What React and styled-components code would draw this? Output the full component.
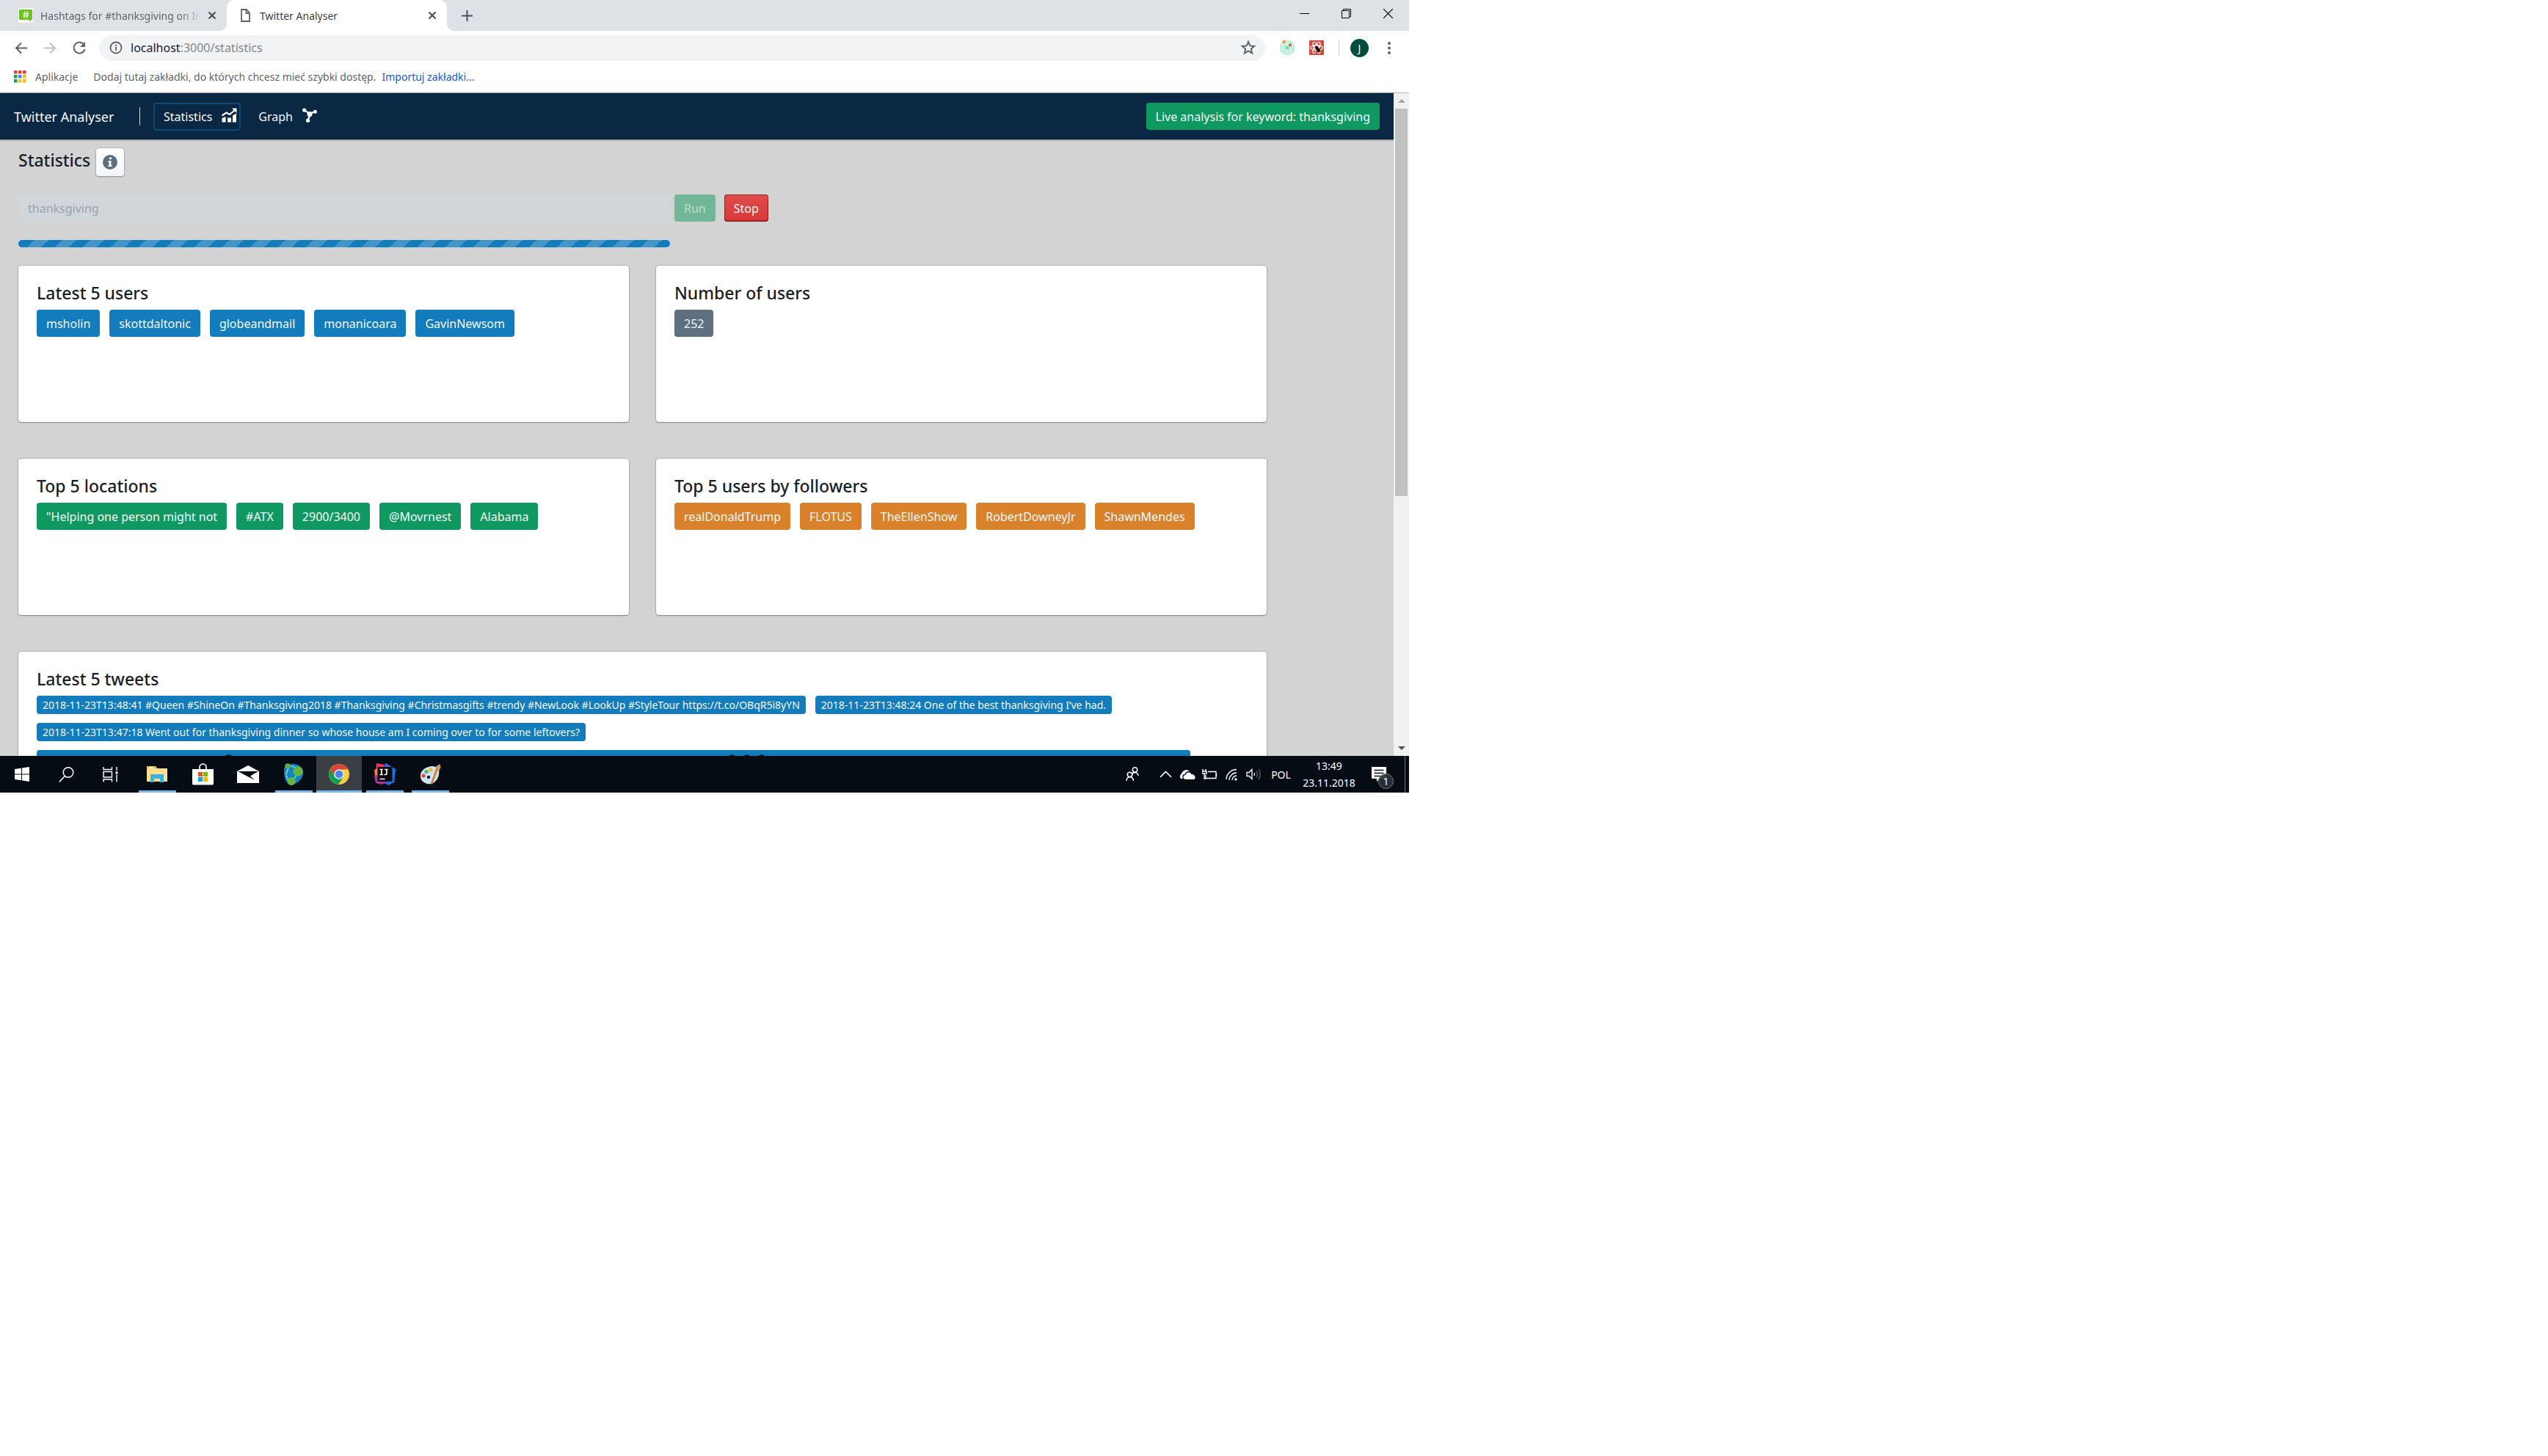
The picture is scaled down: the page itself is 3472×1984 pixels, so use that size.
import React from 'react';
import styled, { createGlobalStyle, css } from 'styled-components';

const GlobalStyle = createGlobalStyle`
  * { box-sizing: border-box; }
  body { margin: 0; background: #fff; }
  body, button, input { font-family: "Noto Sans", "Open Sans", sans-serif; font-size: 16px; }
  button { border: 0; padding: 0; background: none; color: inherit; cursor: pointer; }
  a { color: inherit; text-decoration: none; }
  svg { display: block; flex: none; }
`;

const Desktop = styled.div`
  display: flex;
  flex-direction: column;
  width: 100%;
  max-width: 1920px;
  aspect-ratio: 16 / 9;
  overflow: hidden;
`;

/* ---------- browser chrome ---------- */

const TabStrip = styled.header`
  display: flex;
  flex: none;
  height: 42px;
  background: #dee1e6;
`;

const Tab = styled.div`
  position: relative;
  display: flex;
  align-items: center;
  gap: ${p => (p.$active ? '13px' : '10px')};
  width: ${p => (p.$active ? '300px' : '309px')};
  padding: 0 12px 0 ${p => (p.$active ? '19px' : '25px')};
  font-size: 14px;
  color: #5f6368;
  ${p => p.$active && css`
    background: #fff;
    color: #3c4043;
    border-radius: 10px 10px 0 0;
    &::before, &::after {
      content: '';
      position: absolute;
      bottom: 0;
      width: 10px;
      height: 10px;
    }
    &::before { right: 100%; background: radial-gradient(circle at 0 0, transparent 10px, #fff 10px); }
    &::after { left: 100%; background: radial-gradient(circle at 100% 0, transparent 10px, #fff 10px); }
  `}
`;

const TabTitle = styled.span`
  flex: 1;
  min-width: 0;
  white-space: nowrap;
  ${p => p.$fade && css`mask-image: linear-gradient(90deg, #000 88%, rgba(0, 0, 0, .15));`}
`;

const TabButton = styled.button`
  display: grid;
  place-items: center;
  width: 16px;
  height: 42px;
`;

const NewTab = styled(TabButton)`
  width: 54px;
`;

const WindowButtons = styled.div`
  display: flex;
  margin-left: auto;
`;

const WindowButton = styled.button`
  display: grid;
  place-items: center;
  width: 57px;
  height: 37px;
`;

const Toolbar = styled.div`
  display: flex;
  flex: none;
  align-items: center;
  height: 42px;
  padding: 4px 14px 0 8px;
  background: #fff;
`;

const ToolButton = styled.button`
  display: grid;
  place-items: center;
  width: ${p => p.$w || 40}px;
  height: 36px;
`;

const Omnibox = styled.div`
  display: flex;
  flex: 1;
  align-items: center;
  height: 35px;
  margin: 0 20px 0 7px;
  padding: 0 12px 0 14px;
  border-radius: 18px;
  background: #f1f3f4;
`;

const Address = styled.span`
  flex: 1;
  margin-left: 11px;
  color: #80868b;
  b { font-weight: 400; color: #202124; }
`;

const Extensions = styled.div`
  display: flex;
  align-items: center;
  gap: 20px;
`;

const ToolDivider = styled.i`
  width: 1px;
  height: 20px;
  background: #c6c8cb;
`;

const Avatar = styled.button`
  width: 25px;
  height: 25px;
  margin: 0 15px;
  border-radius: 50%;
  background: #004d40;
  color: #fff;
  font-size: 14px;
`;

const Bookmarks = styled.nav`
  display: flex;
  flex: none;
  align-items: center;
  height: 43px;
  padding: 0 19px 1px;
  border-bottom: 1px solid #b3b3b3;
  background: #fff;
  font-size: 14px;
  color: #5f6368;
`;

const AppsLink = styled.a`
  display: flex;
  align-items: center;
  gap: 12px;
  margin-right: 21px;
`;

const ImportLink = styled.a`
  margin-left: 8px;
  color: #1558d6;
`;

/* ---------- page ---------- */

const Viewport = styled.div`
  display: flex;
  flex: 1;
  min-height: 0;
`;

const Site = styled.div`
  display: flex;
  flex: 1;
  flex-direction: column;
  min-width: 0;
  background: #d3d3d3;
`;

const Navbar = styled.nav`
  display: flex;
  flex: none;
  align-items: center;
  height: 63px;
  padding: 0 19px;
  background: #0a2744;
  color: #f5f8fa;
  box-shadow: 0 0 0 1px rgba(16, 22, 26, .15), 0 1px 2px rgba(16, 22, 26, .35);
`;

const Brand = styled.span`
  width: 171px;
  font-size: 18px;
`;

const NavDivider = styled.i`
  width: 1px;
  height: 25px;
  margin-right: 18px;
  background: #d5dae0;
`;

const NavLink = styled.button`
  display: flex;
  align-items: center;
  gap: 13px;
  height: 38px;
  padding: 0 ${p => (p.$active ? '3px' : '10px')} 0 12px;
  margin-right: 10px;
  border: 2px solid ${p => (p.$active ? '#0c4a78' : 'transparent')};
  border-radius: 4px;
  svg { margin-top: -4px; }
`;

const tones = {
  blue: '#137cbd',
  green: '#0f9960',
  orange: '#d9822b',
  gray: '#5c7080',
};

const Tag = styled.span`
  display: inline-flex;
  align-items: center;
  min-height: ${p => (p.$small ? '25px' : '37px')};
  padding: 0 ${p => (p.$small ? '8px' : '13px')};
  border-radius: 4px;
  background: ${p => tones[p.$tone]};
  color: #f5f8fa;
  font-size: ${p => (p.$small ? '14px' : '16px')};
  line-height: 20px;
  white-space: nowrap;
`;

const LiveTag = styled(Tag)`
  margin-left: auto;
`;

const Page = styled.main`
  flex: 1;
  min-height: 0;
  overflow: hidden;
  padding: 12px 25px 0;
`;

const Heading = styled.h2`
  margin: 0;
  color: #182026;
  font-size: 23px;
  font-weight: 500;
  line-height: 24px;
`;

const TitleRow = styled.div`
  display: flex;
  align-items: center;
  gap: 8px;
  height: 38px;
  margin-bottom: 25px;
  ${Heading} { padding-bottom: 6px; }
`;

const InfoButton = styled.button`
  display: grid;
  place-items: center;
  width: 38px;
  height: 38px;
  border-radius: 4px;
  background: linear-gradient(#fff, #f3f6f8);
  box-shadow: 0 0 0 1px rgba(16, 22, 26, .15), 0 1px 2px rgba(16, 22, 26, .25);
`;

const SearchForm = styled.form`
  display: flex;
  margin-bottom: 25px;
`;

const KeywordInput = styled.input`
  flex: 0 1 888px;
  min-width: 0;
  height: 37px;
  margin-right: 6px;
  padding: 0 13px;
  border: 0;
  border-radius: 4px;
  background: #d0d6da;
  color: #9aa4ac;
`;

const ActionButton = styled.button`
  height: 37px;
  padding: 0 13px;
  margin-right: 12px;
  border-radius: 4px;
  color: #fff;
  ${p => p.$stop ? css`
    background: linear-gradient(#e04b4b, #db3737);
    box-shadow: inset 0 0 0 1px rgba(110, 20, 24, .7), inset 0 -2px 1px rgba(90, 16, 20, .35);
  ` : css`
    background: #72b698;
    color: #bfdccf;
  `}
`;

const ProgressBar = styled.div`
  max-width: 888px;
  height: 10px;
  margin-bottom: 25px;
  border-radius: 5px;
  background: #137cbd linear-gradient(-45deg,
    rgba(255, 255, 255, .2) 25%, transparent 25%, transparent 50%,
    rgba(255, 255, 255, .2) 50%, rgba(255, 255, 255, .2) 75%, transparent 75%) 3px 0 / 38px 38px;
`;

const Cards = styled.section`
  display: grid;
  grid-template-columns: 1fr 1fr;
  gap: 50px 37px;
  max-width: 1701px;
`;

const Card = styled.article`
  grid-column: ${p => (p.$wide ? '1 / -1' : 'auto')};
  min-height: 213px;
  padding: 25px;
  border-radius: 4px;
  background: #fff;
  box-shadow: 0 0 0 1px rgba(16, 22, 26, .15), 0 1px 2px rgba(16, 22, 26, .3);
`;

const Tags = styled.div`
  display: flex;
  flex-wrap: wrap;
  gap: 12px 13px;
  margin-top: 11px;
`;

const EmojiTweet = styled(Tag)`
  width: 1572px;
  align-items: flex-start;
  padding: 6px 0 0 255px;
`;

const EmojiGroup = styled.span`
  display: flex;
  gap: 7px;
  &:last-child { margin-left: 673px; }
`;

const Scrollbar = styled.div`
  display: flex;
  flex-direction: column;
  flex: none;
  width: 21px;
  padding: 0 2px;
  background: #f1f1f1;
`;

const ScrollArrow = styled.button`
  display: grid;
  place-items: center;
  height: 21px;
`;

const Thumb = styled.div`
  height: 528px;
  margin-bottom: auto;
  background: #c1c1c1;
`;

/* ---------- taskbar ---------- */

const Taskbar = styled.footer`
  display: flex;
  flex: none;
  height: 50px;
  background: #060c14;
  color: #fff;
`;

const SystemButton = styled.button`
  display: grid;
  place-items: center;
  width: ${p => p.$w || 60}px;
  height: 50px;
  font-size: 14px;
  line-height: 23px;
`;

const AppGroup = styled.div`
  display: flex;
  margin-left: 3px;
`;

const AppButton = styled(SystemButton)`
  width: 62px;
  background: ${p => (p.$focused ? '#3b3e43' : 'none')};
  ${p => p.$open && css`
    background-image: linear-gradient(#76b9ed, #76b9ed);
    background-repeat: no-repeat;
    background-position: bottom center;
    background-size: ${p.$focused ? '100%' : '51px'} 3px;
  `}
`;

const Tray = styled.div`
  display: flex;
  margin-left: auto;
`;

const ShowDesktop = styled.button`
  width: 6px;
  border-left: 1px solid #6d7278;
`;

/* ---------- icons ---------- */

const Line = ({ w = 20, h = w, sw = 2, color = 'currentColor', children }) => (
  <svg width={w} height={h} viewBox={`0 0 ${w} ${h}`} fill="none" stroke={color} strokeWidth={sw}>{children}</svg>
);

const CloseIcon = () => <Line w={12} sw={2.2} color="#4d5156"><path d="M1.500 1.500l9 9M10.500 1.500l-9 9" /></Line>;

const HashIcon = () => (
  <svg width="20" height="20" viewBox="0 0 20 20">
    <rect width="20" height="20" fill="#fff" />
    <path d="M2 2h16a1 1 0 0 1 1 1v12a1 1 0 0 1-1 1h-1v2.500L13.500 16H2a1 1 0 0 1-1-1V3a1 1 0 0 1 1-1z" fill="#6cc420" />
    <path d="M9 4.500l-1.200 9M12.500 4.500l-1.200 9M6.500 7.500h8M6 10.700h8" stroke="#fff" strokeWidth="1.300" />
  </svg>
);

const PageIcon = () => <Line w={13} h={18} sw={1.8} color="#5f6368"><path d="M1 1h7l4 4.500V17H1zM7.500 1v5H12" /></Line>;

const StatsIcon = () => (
  <svg width="21" height="20" viewBox="0 0 21 20" fill="#fff">
    <path d="M.5 14l5-2v7.500h-5zM8 13l3 1 2-1v6.500H8zM15 10.500l5-3v12h-5z" />
    <path d="M.5 10.500l6-4 4.500 2.500 7-6" fill="none" stroke="#fff" strokeWidth="2.200" />
    <path d="M14 .5h6.500V7z" />
  </svg>
);

const GraphIcon = () => (
  <svg width="20" height="20" viewBox="0 0 20 20" fill="#fff">
    <path d="M2.500 3l7.500 5 7.500-3M10 8L8 16" stroke="#fff" strokeWidth="2" fill="none" />
    <path d="M5 4l5 2.500 6-2-4 5.500-2.500 5-1.500-6z" />
    <circle cx="2.700" cy="3" r="2.600" /><circle cx="17.400" cy="5.300" r="2.500" />
    <circle cx="7.600" cy="17.200" r="2.600" /><circle cx="10" cy="8.500" r="3.500" />
  </svg>
);

const AppsIcon = () => (
  <svg width="17" height="17" viewBox="0 0 17 17">
    {['#ea4335', '#ea4335', '#ea4335', '#0f9d58', '#4285f4', '#fbbc04', '#0f9d58', '#fbbc04', '#fbbc04'].map((c, i) => (
      <rect key={i} x={(i % 3) * 6} y={Math.floor(i / 3) * 6} width="4.500" height="4.500" fill={c} />
    ))}
  </svg>
);

const EmojiTop = () => (
  <svg width="13" height="13" viewBox="0 0 13 13">
    <circle cx="6.500" cy="6.500" r="5.500" fill="#1d8a5c" stroke="#06121c" strokeWidth="1.600" />
  </svg>
);

const StartIcon = () => (
  <svg width="20" height="20" viewBox="0 0 20 20" fill="#fff">
    <path d="M0 3l9-1.200v7.700H0zM10 1.600L20 0v9.500H10zM0 10.500h9v7.700L0 17zM10 10.500h10V20l-10-1.600z" />
  </svg>
);

const ExplorerIcon = () => (
  <svg width="28" height="24" viewBox="0 0 28 24">
    <path d="M0 1h12l2 3h14v18H0z" fill="#ffe08a" />
    <path d="M1 1h11l2 3H1z" fill="#f6b91c" /><rect x="3" y="2" width="6" height="2" fill="#fff" />
    <path d="M5 23V12h18v11h-5v-5h-8v5z" fill="#38b2e8" />
  </svg>
);

const StoreIcon = () => (
  <svg width="29" height="30" viewBox="0 0 29 30">
    <path d="M10 9V5.500a4.500 4.500 0 0 1 9 0V9" fill="none" stroke="#d5d8db" strokeWidth="2" />
    <path d="M0 8h29v20a1.500 1.500 0 0 1-1.500 1.500h-26A1.500 1.500 0 0 1 0 28z" fill="#fff" />
    <rect x="8" y="12" width="6" height="6" fill="#f25022" /><rect x="15" y="12" width="6" height="6" fill="#7fba00" />
    <rect x="8" y="19" width="6" height="6" fill="#00a4ef" /><rect x="15" y="19" width="6" height="6" fill="#ffb900" />
  </svg>
);

const MailIcon = () => (
  <svg width="30" height="24" viewBox="0 0 30 24">
    <path d="M0 8l15-8 15 8v16H0z" fill="#fff" />
    <path d="M1 8h28l-11 6.500 6 5.500L1 8z" fill="#060c14" />
  </svg>
);

const NeoIcon = () => (
  <svg width="28" height="30" viewBox="0 0 28 30">
    <path d="M8 2c8-3 18 1 19 10S18 29 11 29 1 20 1 12 3 4 8 2z" fill="#0a86c4" />
    <path d="M8 6C2 14 4 22 10 25M9 4c4 0 7 1 9 4M19 13c-2 5-4 9-7 12" fill="none" stroke="#d8eef8" strokeWidth="1.500" strokeDasharray="2 1" />
    <circle cx="6" cy="4" r="3.800" fill="#5aab4a" /><circle cx="20" cy="11" r="6.800" fill="#66b245" /><circle cx="11" cy="24.500" r="5.500" fill="#66b245" />
  </svg>
);

const ChromeIcon = () => (
  <svg width="28" height="28" viewBox="0 0 28 28">
    <circle cx="14" cy="14" r="14" fill="#ffcd40" />
    <path d="M1.900 7A14 14 0 0 1 26.100 7L14 8l-6 10z" fill="#db4437" />
    <path d="M1.900 7A14 14 0 0 0 13 28l7-10.500L8 17.500z" fill="#0f9d58" />
    <circle cx="14" cy="14" r="6.800" fill="#f1f1f1" /><circle cx="14" cy="14" r="5.300" fill="#4a86f0" />
  </svg>
);

const IdeaIcon = () => (
  <svg width="29" height="30" viewBox="0 0 29 30">
    <path d="M3 0l11 2-2 14-12 2 2-8z" fill="#fe315d" />
    <path d="M16 0l13 8-2 18-8 4-6-4z" fill="#0878f0" /><path d="M15 0l5 3 2 5h-9z" fill="#3b62e8" />
    <path d="M0 18l4-3 14 12-9 2-7-2z" fill="#a8359c" /><path d="M0 9l5-2v10l-4-1z" fill="#f97a3c" />
    <rect x="4.500" y="5" width="20" height="20" fill="#0b0b0b" />
    <path d="M7.500 8.500h4.500M9.800 8.500v7M7.500 15.500h4.500M14 8.500h4.500M17 8.500v5q0 2-2 2h-1.500M7.500 21.500h7" fill="none" stroke="#fff" strokeWidth="1.700" />
  </svg>
);

const PaintIcon = () => (
  <svg width="29" height="28" viewBox="0 0 29 28">
    <path d="M12 4C5 6 0 11 1 18c1 8 13 13 20 6 5-5 6-12 5-17C22 3 17 2 12 4z" fill="#cfe4f2" />
    <circle cx="12" cy="18" r="2.200" fill="#16222e" />
    <circle cx="5" cy="16" r="2.600" fill="#e0443c" /><circle cx="9" cy="10.500" r="2.600" fill="#56b35c" /><circle cx="15" cy="8" r="2.600" fill="#f3b91f" />
    <path d="M23 5l2 1.500L17 27l-1.500-.5z" fill="#e58a2b" stroke="#d17a22" /><path d="M22 5c0-3 3-3 5-5 2 2 2 5 0 8-2 0-4-1-5-3z" fill="#c99a6a" />
  </svg>
);

const NoticeIcon = () => (
  <svg width="60" height="50" viewBox="0 0 60 50">
    <path d="M15 15h20v16H26l-4 4v-4h-7z" fill="#fff" />
    <path d="M18.500 19.500h13M18.500 23.500h13M18.500 27.500h9" stroke="#060c14" strokeWidth="1.300" />
    <circle cx="34.500" cy="34.500" r="10" fill="#2c3036" fillOpacity=".93" stroke="#74787d" />
    <text x="34.500" y="40" fill="#fff" fontSize="14" textAnchor="middle">1</text>
  </svg>
);

/* ---------- data ---------- */

const latestUsers = ['msholin', 'skottdaltonic', 'globeandmail', 'monanicoara', 'GavinNewsom'];
const locations = ['"Helping one person might not', '#ATX', '2900/3400', '@Movrnest', 'Alabama'];
const topUsers = ['realDonaldTrump', 'FLOTUS', 'TheEllenShow', 'RobertDowneyJr', 'ShawnMendes'];
const tweets = [
  '2018-11-23T13:48:41 #Queen #ShineOn #Thanksgiving2018 #Thanksgiving #Christmasgifts #trendy #NewLook #LookUp #StyleTour https://t.co/OBqR5i8yYN',
  '2018-11-23T13:48:24 One of the best thanksgiving I’ve had.',
  '2018-11-23T13:47:18 Went out for thanksgiving dinner so whose house am I coming over to for some leftovers?',
];

const TagCard = ({ title, tags, tone }) => (
  <Card>
    <Heading>{title}</Heading>
    <Tags>{tags.map(t => <Tag key={t} $tone={tone}>{t}</Tag>)}</Tags>
  </Card>
);

const BrowserChrome = () => (
  <>
    <TabStrip>
      <Tab>
        <HashIcon />
        <TabTitle $fade>Hashtags for #thanksgiving on In</TabTitle>
        <TabButton aria-label="Close tab"><CloseIcon /></TabButton>
      </Tab>
      <Tab $active>
        <PageIcon />
        <TabTitle>Twitter Analyser</TabTitle>
        <TabButton aria-label="Close tab"><CloseIcon /></TabButton>
      </Tab>
      <NewTab aria-label="New tab"><Line w={15} color="#4d5156"><path d="M7.500 0v15M0 7.500h15" /></Line></NewTab>
      <WindowButtons>
        <WindowButton aria-label="Minimise"><Line w={13} sw={1} color="#000"><path d="M0 6.500h13" /></Line></WindowButton>
        <WindowButton aria-label="Restore"><Line w={13} sw={1} color="#000"><path d="M.5 2.500h10v10H.5zM2.500 2.500v-2h10v10h-2" /></Line></WindowButton>
        <WindowButton aria-label="Close"><Line w={13} sw={1.2} color="#000"><path d="M0 0l13 13M13 0L0 13" /></Line></WindowButton>
      </WindowButtons>
    </TabStrip>
    <Toolbar>
      <ToolButton aria-label="Back"><Line w={17} color="#5f6368"><path d="M17 8.500H2M9 1.500l-7 7 7 7" /></Line></ToolButton>
      <ToolButton aria-label="Forward"><Line w={17} color="#bdc0c3"><path d="M0 8.500h15M8 1.500l7 7-7 7" /></Line></ToolButton>
      <ToolButton aria-label="Reload">
        <Line w={18} color="#5f6368"><path d="M15.500 5A7.500 7.500 0 1 0 16.500 11" /><path d="M17 1v7h-7z" fill="#5f6368" stroke="none" /></Line>
      </ToolButton>
      <Omnibox>
        <Line w={18} sw={1.8} color="#5f6368"><circle cx="9" cy="9" r="7.500" /><path d="M9 8v5M9 5v2" /></Line>
        <Address><b>localhost</b>:3000/statistics</Address>
        <Line w={22} sw={2} color="#5f6368"><path d="M11 3l2.300 5.400 5.900.5-4.500 3.900 1.400 5.700-5.100-3-5.100 3 1.400-5.700L2.800 8.900l5.900-.5z" /></Line>
      </Omnibox>
      <Extensions>
        <Line w={20} sw={1.3} color="#74f0b8">
          <circle cx="10" cy="10" r="9.200" /><circle cx="10" cy="10" r="5.800" /><circle cx="10" cy="10" r="2.500" fill="#5fe8a8" />
          <circle cx="5.500" cy="2" r="2" fill="#f58220" stroke="none" /><circle cx="14" cy="6.200" r="2" fill="#f04e23" stroke="none" />
        </Line>
        <svg width="20" height="20" viewBox="0 0 20 20">
          <rect width="20" height="20" rx="1" fill="#dd4438" />
          <g fill="none" stroke="#fff" strokeWidth="1.200">
            <ellipse cx="10" cy="10" rx="8.500" ry="3.300" /><ellipse cx="10" cy="10" rx="8.500" ry="3.300" transform="rotate(60 10 10)" /><ellipse cx="10" cy="10" rx="8.500" ry="3.300" transform="rotate(120 10 10)" />
          </g>
          <circle cx="10" cy="9.500" r="1.700" /><ellipse cx="12" cy="13" rx="2" ry="3" transform="rotate(-25 12 13)" />
          <path d="M8.500 13l7-2M9.500 16.500l6-2.500M12 10l-2.500 6M14 10.500l1 6" stroke="#111" strokeWidth=".8" />
        </svg>
        <ToolDivider />
      </Extensions>
      <Avatar aria-label="Profile">J</Avatar>
      <ToolButton $w={26} aria-label="Menu">
        <svg width="4" height="17" viewBox="0 0 4 17" fill="#5f6368"><circle cx="2" cy="2" r="2" /><circle cx="2" cy="8.500" r="2" /><circle cx="2" cy="15" r="2" /></svg>
      </ToolButton>
    </Toolbar>
    <Bookmarks>
      <AppsLink href="#apps"><AppsIcon /><span>Aplikacje</span></AppsLink>
      <span>Dodaj tutaj zakładki, do których chcesz mieć szybki dostęp.</span>
      <ImportLink href="#import">Importuj zakładki...</ImportLink>
    </Bookmarks>
  </>
);

const StatisticsPage = () => (
  <Page>
    <TitleRow>
      <Heading as="h1">Statistics</Heading>
      <InfoButton aria-label="Information">
        <svg width="20" height="20" viewBox="0 0 20 20">
          <circle cx="10" cy="10" r="10" fill="#5c7080" />
          <path d="M9 3.500h3v2.500H9zM7.500 8h4v6.500h1.500V16h-6v-1.500h1.500v-5H7.500z" fill="#fff" />
        </svg>
      </InfoButton>
    </TitleRow>
    <SearchForm onSubmit={e => e.preventDefault()}>
      <KeywordInput aria-label="Keyword" defaultValue="thanksgiving" disabled />
      <ActionButton type="submit" disabled>Run</ActionButton>
      <ActionButton type="button" $stop>Stop</ActionButton>
    </SearchForm>
    <ProgressBar role="progressbar" aria-label="Analysis running" />
    <Cards>
      <TagCard title="Latest 5 users" tags={latestUsers} tone="blue" />
      <TagCard title="Number of users" tags={['252']} tone="gray" />
      <TagCard title="Top 5 locations" tags={locations} tone="green" />
      <TagCard title="Top 5 users by followers" tags={topUsers} tone="orange" />
      <Card $wide>
        <Heading>Latest 5 tweets</Heading>
        <Tags>
          {tweets.map(t => <Tag key={t} $tone="blue" $small>{t}</Tag>)}
          <EmojiTweet $tone="blue" $small>
            <EmojiGroup><EmojiTop /></EmojiGroup>
            <EmojiGroup><EmojiTop /><EmojiTop /><EmojiTop /></EmojiGroup>
          </EmojiTweet>
        </Tags>
      </Card>
    </Cards>
  </Page>
);

const WindowsTaskbar = () => (
  <Taskbar>
    <SystemButton aria-label="Start"><StartIcon /></SystemButton>
    <SystemButton aria-label="Search"><Line w={21} sw={1.5}><circle cx="13" cy="7.500" r="6.800" /><path d="M8.500 12.500L.7 20.500" /></Line></SystemButton>
    <SystemButton aria-label="Task view">
      <Line w={21} sw={1.4}><path d="M1 0v3.500h11.500V0M1 20.500V17h11.500v3.500M1 6.500h11.500v7.500H1zM19 0v5M19 10.500v10" /><path d="M17.500 6.500h3v3h-3z" fill="#fff" stroke="none" /></Line>
    </SystemButton>
    <AppGroup>
      <AppButton $open aria-label="File Explorer"><ExplorerIcon /></AppButton>
      <AppButton aria-label="Store"><StoreIcon /></AppButton>
      <AppButton aria-label="Mail"><MailIcon /></AppButton>
      <AppButton $open aria-label="Graph database"><NeoIcon /></AppButton>
      <AppButton $open $focused aria-label="Chrome"><ChromeIcon /></AppButton>
      <AppButton $open aria-label="IntelliJ IDEA"><IdeaIcon /></AppButton>
      <AppButton $open aria-label="Paint"><PaintIcon /></AppButton>
    </AppGroup>
    <Tray>
      <SystemButton aria-label="People">
        <Line w={18} h={20} sw={1.5}><circle cx="12.500" cy="4" r="3.200" /><path d="M8.500 10.500c1-4 8-4 8.500 1.500" /><circle cx="5.500" cy="10.500" r="3.200" /><path d="M1 19c0-7 9-7 9.500 0" /></Line>
      </SystemButton>
      <SystemButton $w={30} aria-label="Hidden icons"><Line w={17} h={10} sw={1.6}><path d="M1 9l7.500-7.500L16 9" /></Line></SystemButton>
      <SystemButton $w={30} aria-label="OneDrive">
        <svg width="21" height="13" viewBox="0 0 21 13" fill="#fff"><path d="M1 12a4 4 0 0 1 1-6.500C3 1 9-1.500 13 2c-4-.5-6 1.500-6.500 4C3 6 2.500 10 4 12zM5.500 12c-2-2-.5-5 2-5C8 3 14 2 15.500 6c3 0 5.500 2 5 5l-1 2H7z" /></svg>
      </SystemButton>
      <SystemButton $w={30} aria-label="Battery"><Line w={21} h={14} sw={1.4}><path d="M8 3.500h11v9H5V8M19.500 6v4M1 0v3M5 0v3M0 3h6v3H0zM3 6v7h2" /></Line></SystemButton>
      <SystemButton $w={30} aria-label="Network">
        <Line w={17} sw={1.4}><path d="M1 15A14 14 0 0 1 15 1.500M5 16A10 10 0 0 1 15 6M9 16a6 6 0 0 1 6-6" /><circle cx="14" cy="15" r="1.700" fill="#fff" stroke="none" /></Line>
      </SystemButton>
      <SystemButton $w={30} aria-label="Volume">
        <Line w={21} h={16} sw={1.3}><path d="M1 5.500h3L8 1.500v13l-4-4H1zM11 6q1 2 0 4" /><path d="M14 3.500q3 4.500 0 9M17 1q4.500 7 0 14" stroke="#60656b" /></Line>
      </SystemButton>
      <SystemButton $w={45}>POL</SystemButton>
      <SystemButton $w={86}><span>13:49<br />23.11.2018</span></SystemButton>
      <SystemButton aria-label="Notifications"><NoticeIcon /></SystemButton>
      <ShowDesktop aria-label="Show desktop" />
    </Tray>
  </Taskbar>
);

export default function App() {
  return (
    <Desktop>
      <GlobalStyle />
      <BrowserChrome />
      <Viewport>
        <Site>
          <Navbar>
            <Brand>Twitter Analyser</Brand>
            <NavDivider />
            <NavLink $active>Statistics<StatsIcon /></NavLink>
            <NavLink>Graph<GraphIcon /></NavLink>
            <LiveTag $tone="green">Live analysis for keyword: thanksgiving</LiveTag>
          </Navbar>
          <StatisticsPage />
        </Site>
        <Scrollbar>
          <ScrollArrow aria-label="Scroll up"><svg width="10" height="5" viewBox="0 0 10 5" fill="#a3a3a3"><path d="M0 5l5-5 5 5z" /></svg></ScrollArrow>
          <Thumb />
          <ScrollArrow aria-label="Scroll down"><svg width="10" height="5" viewBox="0 0 10 5" fill="#505050"><path d="M0 0l5 5 5-5z" /></svg></ScrollArrow>
        </Scrollbar>
      </Viewport>
      <WindowsTaskbar />
    </Desktop>
  );
}
